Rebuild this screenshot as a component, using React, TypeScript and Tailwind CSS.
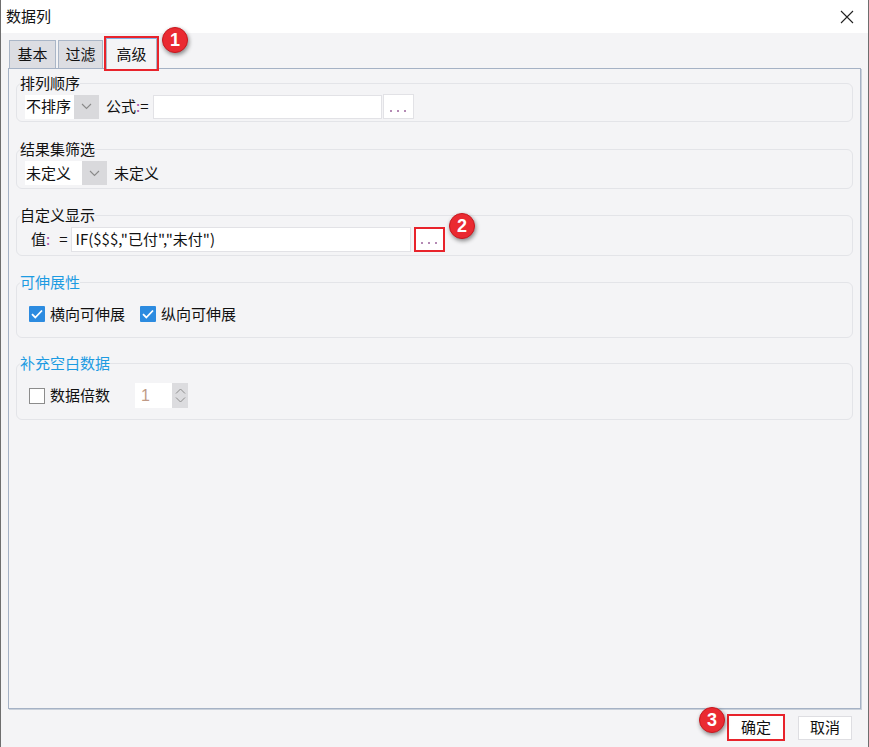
import React from "react";

const font = { fontFamily: '"Noto Sans CJK SC", "Noto Sans", sans-serif' };

function Badge({ n, className }: { n: string; className: string }) {
  return (
    <div
      className={`absolute w-[26px] h-[26px] rounded-full bg-[#ea2a31] border border-[#c8171e] text-white flex items-center justify-center text-[18px] font-bold shadow-[1px_2px_4px_rgba(0,0,0,0.45)] ${className}`}
      style={{ fontFamily: '"Liberation Sans", Arial, sans-serif' }}
    >
      {n}
    </div>
  );
}

function Chevron() {
  return (
    <svg width="11" height="7" viewBox="0 0 11 7" fill="none">
      <path d="M1 1l4.5 4.5L10 1" stroke="#8a8a8a" strokeWidth="1.1" />
    </svg>
  );
}

function Combo({ text, whiteW }: { text: string; whiteW: string }) {
  return (
    <div className="flex h-[24px] shrink-0">
      <div className={`${whiteW} bg-white flex items-center pl-[1px] text-[15px] text-[#111]`}>{text}</div>
      <div className="w-[25px] bg-[#d9d9dc] flex items-center justify-center">
        <Chevron />
      </div>
    </div>
  );
}

function Dots({ red }: { red?: boolean }) {
  return (
    <div
      className={`w-[31px] h-[25px] bg-white flex items-end justify-center gap-[5px] pb-[6px] ${
        red ? "border-2 border-[#e8232b]" : "border border-[#e2e2e6]"
      }`}
    >
      <span className="w-[2px] h-[2px] bg-[#b48ab4]" />
      <span className="w-[2px] h-[2px] bg-[#b48ab4]" />
      <span className="w-[2px] h-[2px] bg-[#b48ab4]" />
    </div>
  );
}

function CheckBox({ checked }: { checked: boolean }) {
  return checked ? (
    <div className="w-[16px] h-[16px] bg-[#2c8be0] flex items-center justify-center rounded-[1px]">
      <svg width="12" height="10" viewBox="0 0 12 10" fill="none">
        <path d="M1 5.2l3.3 3.3L11 1.5" stroke="white" strokeWidth="1.8" />
      </svg>
    </div>
  ) : (
    <div className="w-[16px] h-[16px] bg-white border border-[#8c8c8c]" />
  );
}

function Group({
  title,
  blue,
  className,
  children,
}: {
  title: string;
  blue?: boolean;
  className: string;
  children: React.ReactNode;
}) {
  return (
    <fieldset className={`shrink-0 border border-[#e3e4e8] rounded-[6px] px-0 ${className}`}>
      <legend
        className={`ml-[3px] px-0 text-[15px] leading-[18px] ${blue ? "text-[#1c9be2]" : "text-[#111]"}`}
      >
        {title}
      </legend>
      {children}
    </fieldset>
  );
}

export default function App() {
  return (
    <div
      className="relative w-[869px] h-[747px] bg-[#f4f4f6] flex flex-col border-l border-r border-[#6e6e6e] overflow-hidden"
      style={font}
    >
      {/* title bar */}
      <div className="h-[33px] bg-white flex items-center justify-between shrink-0">
        <div className="pl-[5px] text-[15px] text-[#111]">数据列</div>
        <div className="pr-[14px]">
          <svg width="14" height="14" viewBox="0 0 14 14">
            <path d="M1 1l12 12M13 1L1 13" stroke="#222" strokeWidth="1.1" />
          </svg>
        </div>
      </div>

      {/* tabs */}
      <div className="relative flex items-end gap-[2px] pl-[8px] mt-[5px] h-[31px] z-10 shrink-0">
        <div className="w-[47px] h-[28px] mb-[1px] bg-[#dcdde2] border border-b-0 border-[#aab6c7] flex items-center justify-center text-[15px] text-[#111]">
          基本
        </div>
        <div className="w-[45px] h-[28px] mb-[1px] bg-[#dcdde2] border border-b-0 border-[#aab6c7] flex items-center justify-center text-[15px] text-[#111]">
          过滤
        </div>
        <div className="w-[51px] h-[31px] bg-[#f4f4f6] border border-b-0 border-[#aab6c7] border-t-[#7fb0e6] flex items-center justify-center text-[15px] text-[#111] ml-[1px] outline outline-2 outline-[#e8232b] outline-offset-[0px]">
          高级
        </div>
        <Badge n="1" className="left-[161px] top-[-11px]" />
      </div>

      {/* panel */}
      <div className="relative mx-[7px] -mt-[1px] h-[641px] shrink-0 border border-[#a5b2c5] shadow-[1px_1px_0_#c9d0da] px-[7px] flex flex-col">
        <Group title="排列顺序" className="mt-[5px] h-[48px] pt-[2px]">
          <div className="flex items-center ml-[8px]">
            <Combo text="不排序" whiteW="w-[49px]" />
            <div className="ml-[7px] text-[15px] text-[#111] flex items-center">
              公式<span className="text-[#a64ea6]">:</span>=
            </div>
            <div className="ml-[4px] w-[229px] h-[24px] bg-white border border-[#e2e2e6]" />
            <div className="ml-[1px]">
              <Dots />
            </div>
          </div>
        </Group>

        <Group title="结果集筛选" className="mt-[18px] h-[49px] pt-[3px]">
          <div className="flex items-center ml-[8px]">
            <Combo text="未定义" whiteW="w-[57px]" />
            <div className="ml-[7px] text-[15px] text-[#111]">未定义</div>
          </div>
        </Group>

        <Group title="自定义显示" className="mt-[17px] h-[50px] pt-[3px]">
          <div className="flex items-center ml-[14px] relative">
            <div className="text-[15px] text-[#111]">
              值<span className="text-[#a64ea6]">:</span>
            </div>
            <div className="ml-[9px] text-[15px] text-[#111]">=</div>
            <div className="ml-[3px] w-[340px] h-[25px] bg-white border border-[#e2e2e6] flex items-center pl-[4px] text-[15px] text-[#111]">
              IF($$$,"已付","未付")
            </div>
            <div className="ml-[3px]">
              <Dots red />
            </div>
          </div>
        </Group>

        <Group title="可伸展性" blue className="mt-[17px] h-[65px] pt-[11px]">
          <div className="flex items-center h-[24px] ml-[12px]">
            <CheckBox checked />
            <span className="ml-[5px] text-[15px] text-[#111]">横向可伸展</span>
            <div className="ml-[15px]">
              <CheckBox checked />
            </div>
            <span className="ml-[5px] text-[15px] text-[#111]">纵向可伸展</span>
          </div>
        </Group>

        <Group title="补充空白数据" blue className="mt-[16px] h-[66px] pt-[11px]">
          <div className="flex items-center h-[25px] ml-[12px]">
            <CheckBox checked={false} />
            <span className="ml-[5px] text-[15px] text-[#111]">数据倍数</span>
            <div className="ml-[25px] flex h-[25px]">
              <div
                className="w-[37px] bg-white flex items-center pl-[6px] text-[16px] text-[#c09a86]"
                style={{ fontFamily: '"Liberation Sans", Arial, sans-serif' }}
              >
                1
              </div>
              <div className="w-[16px] bg-[#dcdcdf] flex flex-col items-center justify-center gap-[3px]">
                <svg width="11" height="6" viewBox="0 0 11 6" fill="none">
                  <path d="M1 5.5L5.5 1 10 5.5" stroke="#8c8c8c" strokeWidth="1" />
                </svg>
                <svg width="11" height="6" viewBox="0 0 11 6" fill="none">
                  <path d="M1 0.5L5.5 5 10 0.5" stroke="#8c8c8c" strokeWidth="1" />
                </svg>
              </div>
            </div>
          </div>
        </Group>
      </div>

      {/* buttons */}
      <div className="relative flex justify-end items-center mt-[5px] pr-[16px] gap-[13px]">
        <Badge n="3" className="left-[698px] top-[-7px]" />
        <div className="w-[58px] h-[27px] bg-white border-2 border-[#e8232b] flex items-center justify-center text-[15px] text-[#111]">
          确定
        </div>
        <div className="w-[54px] h-[24px] bg-white border border-[#dedee2] flex items-center justify-center text-[15px] text-[#111]">
          取消
        </div>
      </div>

      <Badge n="2" className="left-[448px] top-[213px]" />
    </div>
  );
}
